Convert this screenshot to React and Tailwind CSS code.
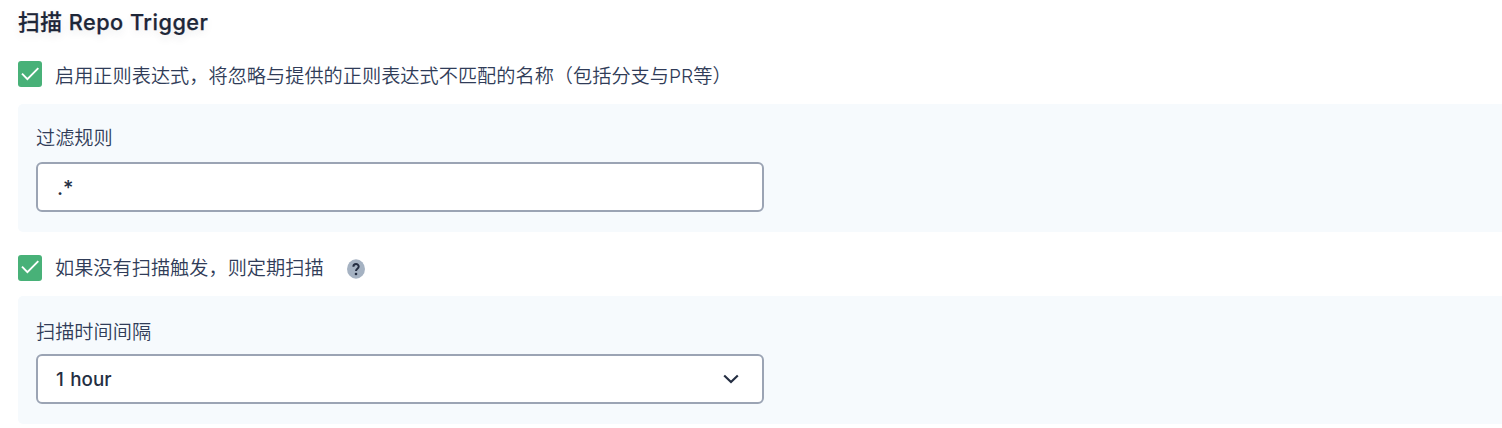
const Check = ({ className = "" }) => (
  <span className={"flex h-[26px] w-6 shrink-0 items-center justify-center rounded-[3px] bg-[#48b178] " + className}>
    <svg width="24" height="26" viewBox="0 0 24 26" fill="none" stroke="#fff" strokeWidth="1.9"><path d="M4 12.6l5.4 5.6L20.3 7.2" /></svg>
  </span>
);
const Label = ({ children }) => <span className="whitespace-nowrap text-[19.2px] leading-6 font-[350]">{children}</span>;

export default function App() {
  return (
    <main className="h-[428px] overflow-hidden bg-white pl-[18px] font-['Inter','Noto_Sans_CJK_SC',sans-serif] text-[#303c58]">
      <h1 className="h-[61px] pt-2 text-[21.7px] leading-7 font-medium tracking-[0.5px] whitespace-nowrap text-[#1d2638] [-webkit-text-stroke:0.25px_#1d2638] [text-shadow:0_4px_8px_rgba(36,46,66,0.1)]">扫描 Repo Trigger</h1>
      <label className="flex h-[43px] gap-[13px]">
        <Check />
        <span className="pt-[3px]"><Label>启用正则表达式，将忽略与提供的正则表达式不匹配的名称（包括分支与PR等）</Label></span>
      </label>
      <section className="h-32 rounded-l-[5px] bg-[#f6fafd] pt-[22px] pl-[18px]">
        <div className="h-9"><Label>过滤规则</Label></div>
        <div className="flex h-[50px] w-[728px] items-center rounded-[6px] border-2 border-[#9ba4b4] bg-white pt-0.5 pl-[19px] text-[20px] font-medium text-[#242e42]">.*</div>
      </section>
      <div className="mt-[23px] flex h-[41px]">
        <Check className="pb-0.5" />
        <span className="pt-px pl-[13px]"><Label>如果没有扫描触发，则定期扫描</Label></span>
        <svg className="mt-1 ml-[22px]" width="20" height="20" viewBox="0 0 20 20" fill="none">
          <ellipse cx="10" cy="10" rx="9" ry="9.7" fill="#a5b2c2" />
          <path d="M7.4 7.8C7.4 4.2 12.7 4.3 12.7 7.5C12.7 9.8 10 9.6 10 12" stroke="#242e42" strokeWidth="2" />
          <circle cx="10" cy="15" r="1.3" fill="#242e42" />
        </svg>
      </div>
      <section className="h-32 rounded-l-[5px] bg-[#f6fafd] pt-6 pl-[18px]">
        <div className="h-[34px]"><Label>扫描时间间隔</Label></div>
        <div className="flex h-[50px] w-[728px] items-center justify-between rounded-[6px] border-2 border-[#9ba4b4] bg-white pr-[22px] pl-[18px] text-[18.8px] font-medium text-[#242e42] [word-spacing:1.5px]">
          <span className="pt-0.5">1 hour</span>
          <svg width="18" height="12" viewBox="0 0 18 12" fill="none" stroke="#242e42" strokeWidth="2.2"><path d="M2.2 2.5L9 9L15.8 2.5" /></svg>
        </div>
      </section>
    </main>
  );
}
